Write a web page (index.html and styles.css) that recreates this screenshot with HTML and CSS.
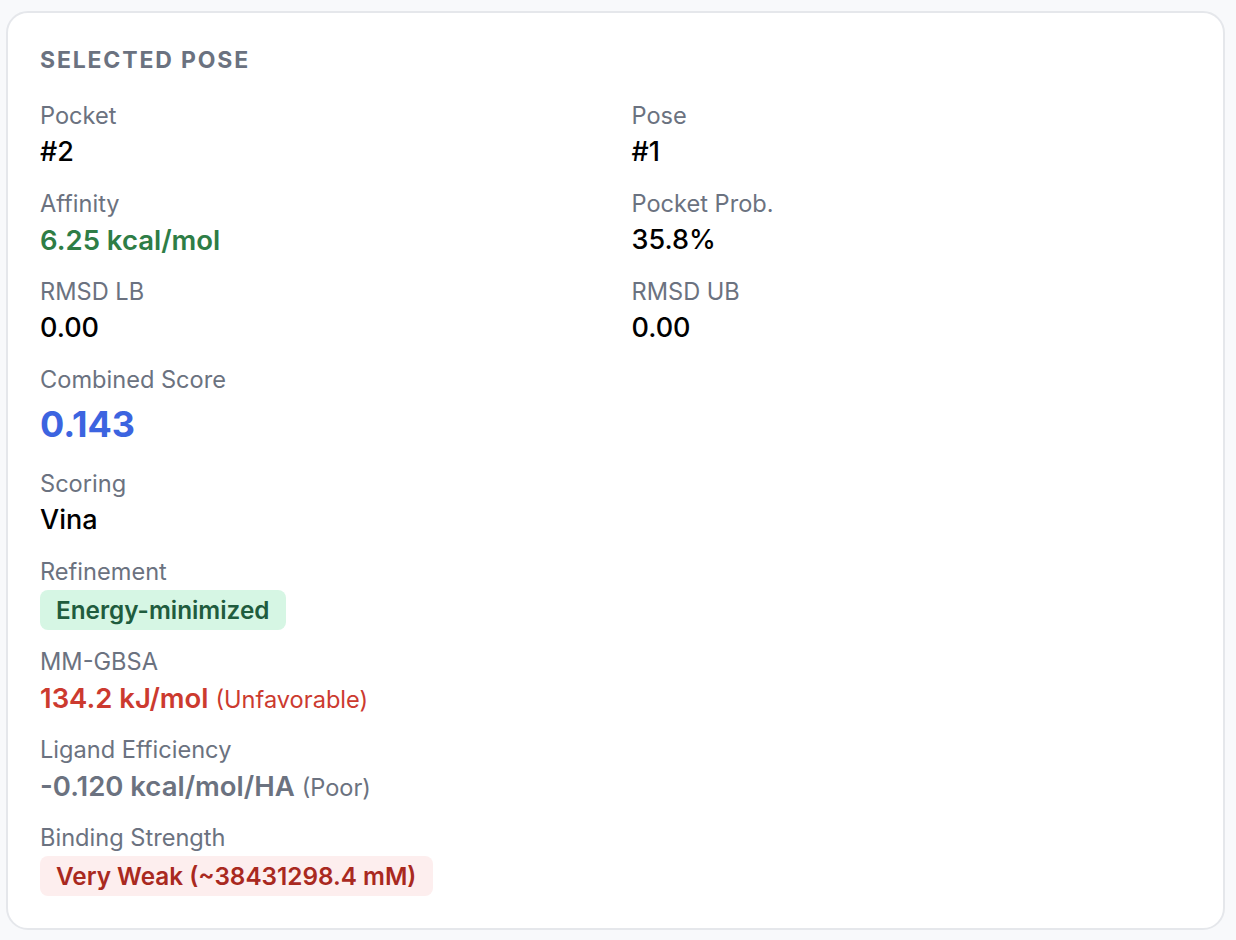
FILE: index.html
```html
<!DOCTYPE html>
<html lang="en">
<head>
<meta charset="utf-8">
<title>Selected Pose</title>
<link rel="stylesheet" href="styles.css">
</head>
<body>
  <section class="card">
    <h2 class="card-title">Selected Pose</h2>
    <div class="fields">
      <div class="field">
        <div class="label">Pocket</div>
        <div class="value">#2</div>
      </div>
      <div class="field">
        <div class="label">Pose</div>
        <div class="value">#1</div>
      </div>
      <div class="field">
        <div class="label">Affinity</div>
        <div class="value value-good">6.25 kcal/mol</div>
      </div>
      <div class="field">
        <div class="label">Pocket Prob.</div>
        <div class="value">35.8%</div>
      </div>
      <div class="field">
        <div class="label">RMSD LB</div>
        <div class="value">0.00</div>
      </div>
      <div class="field">
        <div class="label">RMSD UB</div>
        <div class="value">0.00</div>
      </div>
      <div class="field wide">
        <div class="label">Combined Score</div>
        <div class="value value-score">0.143</div>
      </div>
      <div class="field wide">
        <div class="label">Scoring</div>
        <div class="value">Vina</div>
      </div>
      <div class="field wide">
        <div class="label">Refinement</div>
        <div><span class="badge badge-green">Energy-minimized</span></div>
      </div>
      <div class="field wide">
        <div class="label">MM-GBSA</div>
        <div class="value value-bad">134.2 kJ/mol <span class="note">(Unfavorable)</span></div>
      </div>
      <div class="field wide">
        <div class="label">Ligand Efficiency</div>
        <div class="value value-muted">-0.120 kcal/mol/HA <span class="note">(Poor)</span></div>
      </div>
      <div class="field wide">
        <div class="label">Binding Strength</div>
        <div><span class="badge badge-red">Very Weak (~38431298.4 mM)</span></div>
      </div>
    </div>
  </section>
</body>
</html>
```

FILE: styles.css
```css
* {
  box-sizing: border-box;
}

body {
  margin: 0;
  background: #f8f9fb;
  font-family: Inter, "Noto Sans", "Liberation Sans", sans-serif;
  color: #111111;
}

.card {
  margin: 11px 11px 0 6px;
  background: #ffffff;
  border: 2px solid #e5e7eb;
  border-radius: 22px;
  padding: 31px 32px 32px 32px;
}

.card-title {
  margin: 0 0 24px;
  font-size: 23px;
  line-height: 32px;
  font-weight: 700;
  letter-spacing: 0.08em;
  text-transform: uppercase;
  color: #6b7280;
}

.fields {
  display: grid;
  grid-template-columns: 1fr 1fr;
  column-gap: 32px;
  row-gap: 16px;
}

.field.wide {
  grid-column: 1 / -1;
}

.label {
  font-size: 23.6px;
  line-height: 32px;
  color: #6b7280;
}

.value {
  font-size: 27px;
  line-height: 40px;
  font-weight: 500;
  color: #000000;
}

.value-good {
  color: #2e7d46;
  font-weight: 600;
  font-size: 27.5px;
}

.value-score {
  font-size: 36px;
  line-height: 52px;
  margin: 2px 0;
  font-weight: 700;
  color: #3c64e0;
}

.value-bad {
  color: #cc3a2f;
  font-weight: 600;
  font-size: 27.5px;
}

.value-muted {
  color: #6b7280;
  font-weight: 600;
  font-size: 27.5px;
}

.note {
  font-size: 23.6px;
  line-height: 1;
  font-weight: 400;
}

.badge {
  display: inline-block;
  margin-top: 2px;
  padding: 0 17px 0 16px;
  height: 40px;
  line-height: 40px;
  border-radius: 8px;
  font-size: 24.3px;
  font-weight: 600;
}

.badge-green {
  background: #d6f6e4;
  color: #1f5c3e;
}

.badge-red {
  background: #fdeeee;
  color: #a9291f;
}
```
